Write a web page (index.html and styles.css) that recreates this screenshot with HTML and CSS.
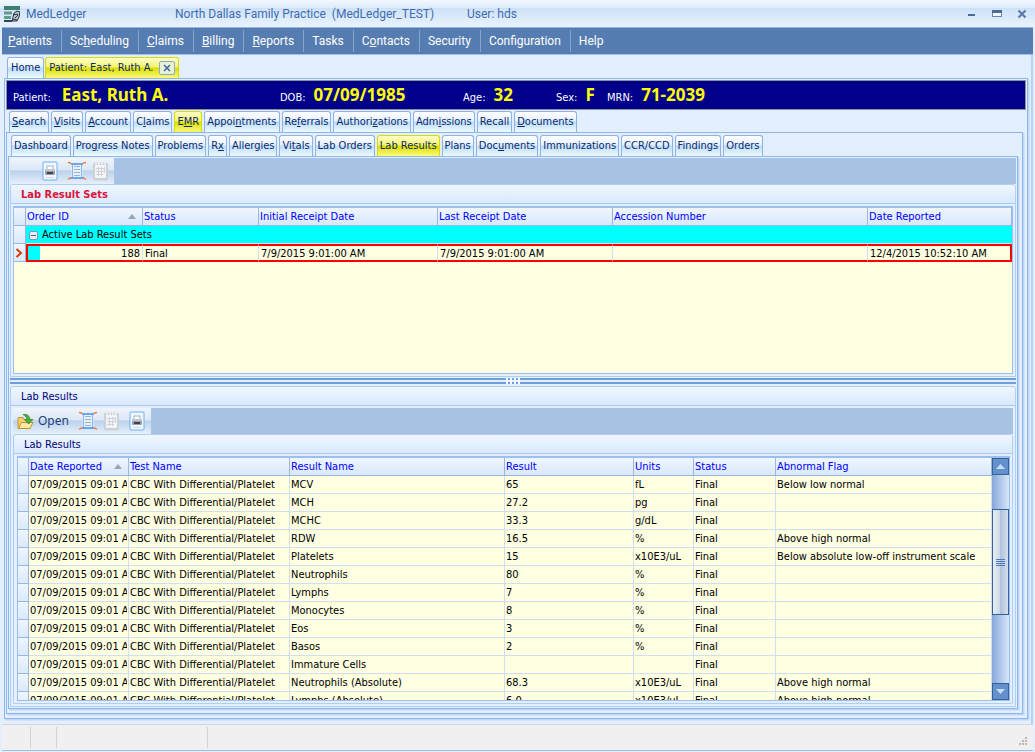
FILE: index.html
```html
<!DOCTYPE html>
<html lang="en">
<head>
    <meta charset="UTF-8">
    <meta name="viewport" content="width=device-width, initial-scale=1.0">
    <title>MedLedger</title>
    <link rel="stylesheet" href="styles.css">
</head>
<body>
    <svg class="sprite" aria-hidden="true">
        <symbol id="icon-print" viewBox="0 0 16 20">
            <rect x="1" y="1" width="14" height="18" rx="1" fill="#f1f7ff" stroke="#6cb0f2"/>
            <rect x="5" y="5" width="6" height="4" fill="#fff" stroke="#aab4c4"/>
            <rect x="3" y="8" width="10" height="6" rx="1" fill="#9aa0aa"/>
            <rect x="3" y="8" width="10" height="2" fill="#c1c6cf"/>
            <rect x="5" y="11" width="6" height="2" fill="#3c4350"/>
            <path d="M4 16.500h8" stroke="#d3dbe6"/>
        </symbol>
        <symbol id="icon-scroll" viewBox="0 0 20 20">
            <path d="M3 2h14l-1.500 3v10l2 3h-15l2-3v-10z" fill="#e6effc"/>
            <path d="M4 3h12M3 17h14" stroke="#6ea5ea" stroke-width="2"/>
            <path d="M5.500 4v12M14.500 4v12" stroke="#8bb7ee"/>
            <path d="M7 5.500h6M7 8.500h6M7 11.500h6M7 14.500h6" stroke="#9fb4cf"/>
            <path d="M1 1.500l3 .5M19 1.500l-3 .5M1 18.500l3-2M19 18.500l-3-2" stroke="#ff7a33" stroke-width="1.500"/>
        </symbol>
        <symbol id="icon-sheet" viewBox="0 0 17 20">
            <rect x="1" y="1.500" width="15" height="18" rx="2" fill="#ccd0d7"/>
            <rect x="3" y="4" width="11" height="13" fill="#f3f4f6"/>
            <path d="M3 2.500h11" stroke="#f2f2f2" stroke-width="2" stroke-dasharray="2 1"/>
            <path d="M4 7.500h9M4 10.500h9M4 13.500h7M6.500 6v9M9.500 6v9M12.500 6v6" stroke="#cfd3d9"/>
        </symbol>
        <symbol id="icon-folder" viewBox="0 0 17 17">
            <path d="M1 15.500v-10q0-1 1-1h4l1 2h6v9z" fill="#f5cf6b" stroke="#c39432"/>
            <path d="M1.500 15.500l3-6h11.500l-3 6z" fill="#ffe9a0" stroke="#c39432"/>
            <path d="M6 1.500q6-1 7 5h3l-4.500 4.500-4-4.500h2.500q0-3-4-5z" fill="#4cae3d" stroke="#2f8527" stroke-width=".7"/>
        </symbol>
    </svg>

    <div class="window">
        <header class="titlebar">
            <svg class="logo" viewBox="0 0 16 16" aria-hidden="true">
                <path d="M0 2h16" stroke="#3f7f72" stroke-width="4"/>
                <path d="M0 7h8M0 11.500h7" stroke="#629a90" stroke-width="3"/>
                <path d="M0 15h8" stroke="#2d4a4a" stroke-width="2"/>
                <path d="M8 15l1-4 1-4 3-2 3 1-1 5-2 4z" fill="#b9c6d0" stroke="#26303a"/>
                <path d="M9 9l5-1M11 12l3-3M9 13l4 1" stroke="#26303a"/>
            </svg>
            <span class="app-name">MedLedger</span>
            <span class="practice">North Dallas Family Practice&nbsp; (MedLedger_TEST)</span>
            <span class="user">User: hds</span>
            <div class="window-buttons">
                <button aria-label="Minimize"><svg viewBox="0 0 10 10"><path d="M1 6h7" stroke="#4a6a99" stroke-width="2"/></svg></button>
                <button aria-label="Maximize"><svg viewBox="0 0 10 10"><rect x=".5" y="1.500" width="9" height="6" fill="#f4f9ff" stroke="#6a87b2"/><path d="M0 2.500h10" stroke="#4a6a99" stroke-width="3"/></svg></button>
                <button aria-label="Close"><svg viewBox="0 0 10 10"><path d="M1.500 1.500l7 7M8.500 1.500l-7 7" stroke="#5877a6" stroke-width="2"/></svg></button>
            </div>
        </header>

        <nav class="menu">
            <button><u>P</u>atients</button>
            <button>Sc<u>h</u>eduling</button>
            <button><u>C</u>laims</button>
            <button><u>B</u>illing</button>
            <button><u>R</u>eports</button>
            <button>Tasks</button>
            <button>C<u>o</u>ntacts</button>
            <button>Security</button>
            <button>Configuration</button>
            <button>Help</button>
        </nav>

        <main class="workspace">
            <div class="tabs page-tabs">
                <button class="tab">Home</button>
                <div class="tab active closable">
                    <button class="tab-label">Patient: East, Ruth A.</button>
                    <button class="tab-close" aria-label="Close tab"><svg viewBox="0 0 8 8"><path d="M1 1l6 6M7 1l-6 6" stroke="#3f64a0" stroke-width="1.500"/></svg></button>
                </div>
            </div>

            <div class="panel page">
                <dl class="patient">
                    <div class="patient-name"><dt>Patient:</dt><dd>East, Ruth A.</dd></div>
                    <div><dt>DOB:</dt><dd>07/09/1985</dd></div>
                    <div><dt>Age:</dt><dd>32</dd></div>
                    <div><dt>Sex:</dt><dd>F</dd></div>
                    <div><dt>MRN:</dt><dd>71-2039</dd></div>
                </dl>

                <div class="tabs">
                    <button class="tab"><u>S</u>earch</button>
                    <button class="tab"><u>V</u>isits</button>
                    <button class="tab"><u>A</u>ccount</button>
                    <button class="tab">C<u>l</u>aims</button>
                    <button class="tab active">E<u>M</u>R</button>
                    <button class="tab">Appoi<u>n</u>tments</button>
                    <button class="tab">Re<u>f</u>errals</button>
                    <button class="tab">Authori<u>z</u>ations</button>
                    <button class="tab">Adm<u>i</u>ssions</button>
                    <button class="tab">Recall</button>
                    <button class="tab"><u>D</u>ocuments</button>
                </div>

                <div class="panel emr">
                    <div class="tabs">
                        <button class="tab">Dashboard</button>
                        <button class="tab">Pro<u>g</u>ress Notes</button>
                        <button class="tab">Problems</button>
                        <button class="tab">R<u>x</u></button>
                        <button class="tab">Aller<u>g</u>ies</button>
                        <button class="tab">Vi<u>t</u>als</button>
                        <button class="tab">Lab Orders</button>
                        <button class="tab active">Lab Results</button>
                        <button class="tab">Plans</button>
                        <button class="tab">Doc<u>u</u>ments</button>
                        <button class="tab">Immunizations</button>
                        <button class="tab">CCR/CCD</button>
                        <button class="tab">Findings</button>
                        <button class="tab">Orders</button>
                    </div>

                    <div class="panel labs">
                        <div class="toolbar">
                            <div class="tools tools-sets">
                                <button class="print-button" aria-label="Print"><svg class="print"><use href="#icon-print"/></svg></button>
                                <button aria-label="View report"><svg class="scroll"><use href="#icon-scroll"/></svg></button>
                                <button aria-label="Flow sheet" disabled><svg class="sheet"><use href="#icon-sheet"/></svg></button>
                            </div>
                        </div>

                        <section class="group sets">
                            <h2 class="caption caption-red">Lab Result Sets</h2>
                            <div class="grid">
                                <table class="sets-table">
                                    <colgroup><col><col><col><col><col><col><col></colgroup>
                                    <thead>
                                        <tr><th></th><th class="sorted">Order ID</th><th>Status</th><th>Initial Receipt Date</th><th>Last Receipt Date</th><th>Accession Number</th><th>Date Reported</th></tr>
                                    </thead>
                                    <tbody>
                                        <tr class="group-row"><td class="marker"></td><td colspan="6"><button class="collapse" aria-label="Collapse group"></button>Active Lab Result Sets</td></tr>
                                        <tr class="selected"><td class="marker"><svg viewBox="0 0 8 10"><path d="M1.500 1l4.500 4-4.500 4" fill="none" stroke="#d83a10" stroke-width="2"/></svg></td><td class="number">188</td><td>Final</td><td>7/9/2015 9:01:00 AM</td><td>7/9/2015 9:01:00 AM</td><td></td><td>12/4/2015 10:52:10 AM</td></tr>
                                    </tbody>
                                </table>
                            </div>
                        </section>

                        <div class="splitter"><span></span></div>

                        <section class="group results">
                            <h2 class="caption">Lab Results</h2>
                            <div class="toolbar">
                                <div class="tools tools-results">
                                    <button class="open"><svg class="folder"><use href="#icon-folder"/></svg>Open</button>
                                    <button aria-label="View report"><svg class="scroll"><use href="#icon-scroll"/></svg></button>
                                    <button aria-label="Flow sheet" disabled><svg class="sheet"><use href="#icon-sheet"/></svg></button>
                                    <button class="print-button" aria-label="Print"><svg class="print"><use href="#icon-print"/></svg></button>
                                </div>
                            </div>
                            <div class="group inner">
                                <h3 class="caption">Lab Results</h3>
                                <div class="grid">
                                    <div class="grid-view">
                                        <table class="results-table">
                                            <colgroup><col><col><col><col><col><col><col><col></colgroup>
                                            <thead>
                                                <tr><th></th><th class="sorted">Date Reported</th><th>Test Name</th><th>Result Name</th><th>Result</th><th>Units</th><th>Status</th><th>Abnormal Flag</th></tr>
                                            </thead>
                                            <tbody>
                                                <tr><td class="marker"></td><td>07/09/2015 09:01 AM</td><td>CBC With Differential/Platelet</td><td>MCV</td><td>65</td><td>fL</td><td>Final</td><td>Below low normal</td></tr>
                                                <tr><td class="marker"></td><td>07/09/2015 09:01 AM</td><td>CBC With Differential/Platelet</td><td>MCH</td><td>27.2</td><td>pg</td><td>Final</td><td></td></tr>
                                                <tr><td class="marker"></td><td>07/09/2015 09:01 AM</td><td>CBC With Differential/Platelet</td><td>MCHC</td><td>33.3</td><td>g/dL</td><td>Final</td><td></td></tr>
                                                <tr><td class="marker"></td><td>07/09/2015 09:01 AM</td><td>CBC With Differential/Platelet</td><td>RDW</td><td>16.5</td><td>%</td><td>Final</td><td>Above high normal</td></tr>
                                                <tr><td class="marker"></td><td>07/09/2015 09:01 AM</td><td>CBC With Differential/Platelet</td><td>Platelets</td><td>15</td><td>x10E3/uL</td><td>Final</td><td>Below absolute low-off instrument scale</td></tr>
                                                <tr><td class="marker"></td><td>07/09/2015 09:01 AM</td><td>CBC With Differential/Platelet</td><td>Neutrophils</td><td>80</td><td>%</td><td>Final</td><td></td></tr>
                                                <tr><td class="marker"></td><td>07/09/2015 09:01 AM</td><td>CBC With Differential/Platelet</td><td>Lymphs</td><td>7</td><td>%</td><td>Final</td><td></td></tr>
                                                <tr><td class="marker"></td><td>07/09/2015 09:01 AM</td><td>CBC With Differential/Platelet</td><td>Monocytes</td><td>8</td><td>%</td><td>Final</td><td></td></tr>
                                                <tr><td class="marker"></td><td>07/09/2015 09:01 AM</td><td>CBC With Differential/Platelet</td><td>Eos</td><td>3</td><td>%</td><td>Final</td><td></td></tr>
                                                <tr><td class="marker"></td><td>07/09/2015 09:01 AM</td><td>CBC With Differential/Platelet</td><td>Basos</td><td>2</td><td>%</td><td>Final</td><td></td></tr>
                                                <tr><td class="marker"></td><td>07/09/2015 09:01 AM</td><td>CBC With Differential/Platelet</td><td>Immature Cells</td><td></td><td></td><td>Final</td><td></td></tr>
                                                <tr><td class="marker"></td><td>07/09/2015 09:01 AM</td><td>CBC With Differential/Platelet</td><td>Neutrophils (Absolute)</td><td>68.3</td><td>x10E3/uL</td><td>Final</td><td>Above high normal</td></tr>
                                                <tr><td class="marker"></td><td>07/09/2015 09:01 AM</td><td>CBC With Differential/Platelet</td><td>Lymphs (Absolute)</td><td>6.0</td><td>x10E3/uL</td><td>Final</td><td>Above high normal</td></tr>
                                            </tbody>
                                        </table>
                                    </div>
                                    <div class="scrollbar">
                                        <button aria-label="Scroll up"><svg viewBox="0 0 9 5"><path d="M0 5l4.500-5 4.500 5z" fill="#c9dcf4"/></svg></button>
                                        <div class="track"><div class="thumb"></div></div>
                                        <button aria-label="Scroll down"><svg viewBox="0 0 9 5"><path d="M0 0l4.500 5 4.500-5z" fill="#c9dcf4"/></svg></button>
                                    </div>
                                </div>
                            </div>
                        </section>
                    </div>
                </div>
            </div>
        </main>

        <footer class="statusbar">
            <span></span><span></span><span></span>
            <svg class="grip" viewBox="0 0 8 8"><path d="M6 0h2v2h-2zM3 3h2v2h-2zM6 3h2v2h-2zM0 6h2v2h-2zM3 6h2v2h-2zM6 6h2v2h-2z" fill="#b9b9b9"/></svg>
        </footer>
    </div>
</body>
</html>
```
FILE: styles.css
```css
* {
    margin: 0;
    padding: 0;
    box-sizing: border-box;
}

body {
    height: 100vh;
    font-family: "DejaVu Sans Condensed", "DejaVu Sans", sans-serif;
    font-size: 11px;
    line-height: 14px;
    color: #000;
    background: #e3efff;
}

button {
    font: inherit;
    color: inherit;
    border: none;
    background: none;
    white-space: nowrap;
}

svg {
    display: block;
}

.sprite {
    display: none;
}

.window {
    display: flex;
    flex-direction: column;
    height: 100vh;
    min-height: 600px;
}

/* title bar */
.titlebar {
    display: flex;
    align-items: center;
    flex: none;
    height: 27px;
    padding: 0 8px 0 4px;
    font-family: Roboto, sans-serif;
    font-size: 12px;
    color: #3f6cb0;
    background: linear-gradient(#f2f8ff, #dcebfa 30%, #cde2f8 31%, #e9f3fd);
}

.logo {
    width: 16px;
    height: 16px;
    margin-right: 6px;
}

.app-name {
    width: 149px;
}

.practice {
    width: 292px;
}

.window-buttons {
    display: flex;
    gap: 15px;
    margin-left: auto;
}

.window-buttons svg {
    width: 10px;
    height: 10px;
}

/* main menu */
.menu {
    display: flex;
    align-items: center;
    flex: none;
    height: 28px;
    margin: 0 2px;
    border-top: 1px solid #8db4e3;
    border-bottom: 1px solid #9ec3f0;
    color: #fff;
    background: #567db1;
}

.menu button {
    height: 22px;
    padding: 0 9px 0 8px;
    border-right: 1px solid #86a5cf;
    font-family: Roboto, sans-serif;
    font-size: 12px;
}

.menu button:first-child {
    padding-left: 6px;
}

.menu button:last-child {
    border-right: none;
}

.workspace {
    display: flex;
    flex-direction: column;
    flex: 1;
    min-height: 0;
    margin: 0 2px;
    padding: 2px 3px 5px 2px;
    border-right: 2px solid #b5d2f5;
}

/* tabs */
.tabs {
    display: flex;
    flex: none;
    gap: 2px;
    height: 21px;
    padding-left: 3px;
    color: #0b2a6b;
}

.tab {
    padding: 0 2px;
    border: 1px solid #8db2e3;
    border-bottom: none;
    border-radius: 3px 3px 0 0;
    background: linear-gradient(#fff, #e4f1ff 45%, #bcdcfb 50%, #eefaff);
}

.tab.active {
    border-color: #d8dc00;
    background: linear-gradient(#ffffc8, #f4f470 45%, #dcdc00 50%, #fafa7c);
}

.page-tabs {
    gap: 1px;
}

.page-tabs .tab {
    padding: 0 3px;
}

.closable {
    display: flex;
    align-items: center;
    gap: 6px;
}

.tab-close {
    padding: 2px 3px;
    border: 1px solid #8caad0;
    border-radius: 2px;
    background: #e8f0d8;
}

.tab-close svg {
    width: 8px;
    height: 8px;
}

.panel {
    display: flex;
    flex-direction: column;
    flex: 1;
    min-height: 0;
    padding: 1px;
    border: 1px solid #8db6ea;
    background: #e3efff;
    box-shadow: 1px 1px #c0d7f5, 2px 2px #d2e3fa;
}

/* patient banner */
.patient {
    display: grid;
    grid-template-columns: 267px 183px 93px 51px auto;
    align-items: center;
    flex: none;
    height: 30px;
    margin-bottom: 1px;
    padding-left: 6px;
    border: 1px solid #8a8f98;
    background: #00008b;
}

.patient div {
    display: flex;
    align-items: baseline;
    gap: 8px;
}

.patient .patient-name {
    gap: 11px;
}

.patient dt {
    color: #fff;
}

.patient dd {
    font-family: "Noto Sans", sans-serif;
    font-size: 17px;
    line-height: 24px;
    font-weight: bold;
    color: #ff0;
}

.page > .panel {
    margin-right: 3px;
    margin-bottom: 3px;
}

.emr {
    padding-top: 2px;
}

.emr > .panel {
    margin-right: 3px;
    margin-bottom: 3px;
}

/* toolbars */
.toolbar {
    flex: none;
    height: 26px;
    background: #a6c3e3;
}

.tools {
    display: flex;
    align-items: center;
    gap: 5px;
    width: max-content;
    height: 26px;
    background: linear-gradient(#eef4fc, #dce8f6 45%, #bdd2ec 50%, #e6f0fb);
}

.tools-sets {
    padding: 0 5px 0 32px;
}

.tools-sets .print-button {
    margin-right: 4px;
}

.tools-results {
    padding: 0 6px 0 4px;
}

.tools-results .print-button {
    margin-left: 4px;
}

.open {
    display: flex;
    align-items: center;
    gap: 4px;
    margin-right: 4px;
    font-family: "Noto Sans", sans-serif;
    font-size: 12px;
    color: #1e3f7d;
}

.print {
    width: 16px;
    height: 20px;
}

.scroll {
    width: 20px;
    height: 20px;
}

.sheet {
    width: 17px;
    height: 20px;
}

.folder {
    width: 17px;
    height: 17px;
}

/* group boxes */
.group {
    display: flex;
    flex-direction: column;
    padding: 0 2px 2px;
    border: 1px solid #b0cff5;
    border-radius: 3px 3px 0 0;
    background: #e3efff;
}

.caption {
    flex: none;
    height: 19px;
    margin: 0 -2px 2px;
    padding: 3px 10px;
    border-bottom: 1px solid #a9c9f2;
    border-radius: 3px 3px 0 0;
    font-size: 11px;
    font-weight: normal;
    color: #00007b;
    background: linear-gradient(#eff6ff, #d9e9fc);
}

.caption-red {
    font-weight: bold;
    color: #dc143c;
}

.sets {
    flex: 0 0 193px;
}

.results {
    flex: 1;
    min-height: 0;
}

.inner {
    flex: 1;
    min-height: 0;
    padding-left: 3px;
}

.inner .caption {
    margin-left: -3px;
}

/* data grids */
.grid {
    display: flex;
    align-items: stretch;
    flex: 1;
    min-height: 0;
    border: 1px solid #9cc0ee;
    border-top: 2px solid #9cc0ee;
    background: #ffffe1;
    overflow: hidden;
}

.grid-view {
    flex: 1;
    min-width: 0;
    overflow: hidden;
}

table {
    width: 100%;
    height: max-content;
    table-layout: fixed;
    border-spacing: 0;
}

.sets-table col:nth-child(1) { width: 12px; }
.sets-table col:nth-child(2) { width: 117px; }
.sets-table col:nth-child(3) { width: 116px; }
.sets-table col:nth-child(4) { width: 179px; }
.sets-table col:nth-child(5) { width: 175px; }
.sets-table col:nth-child(6) { width: 255px; }

.results-table col:nth-child(1) { width: 11px; }
.results-table col:nth-child(2) { width: 100px; }
.results-table col:nth-child(3) { width: 161px; }
.results-table col:nth-child(4) { width: 215px; }
.results-table col:nth-child(5) { width: 129px; }
.results-table col:nth-child(6) { width: 60px; }
.results-table col:nth-child(7) { width: 82px; }

th,
td {
    height: 18px;
    padding: 0 1px;
    border-right: 1px solid #d0def2;
    border-bottom: 1px solid #d0def2;
    text-align: left;
    white-space: nowrap;
    overflow: clip;
    overflow-clip-margin: content-box;
}

th {
    border-color: #9ab8dd;
    font-weight: normal;
    color: #00f;
    background: linear-gradient(#f0f6ff, #d8e8fb);
}

.sorted::after {
    content: "";
    float: right;
    margin: 4px 5px 0 0;
    border: 4px solid transparent;
    border-top: none;
    border-bottom: 5px solid #98a4b8;
}

.selected td:not(.marker) {
    padding: 0 2px;
    border-top: 2px solid #f00;
    border-bottom: 2px solid #f00;
    line-height: 13px;
}

.marker {
    border-color: #9ab8dd;
    background: linear-gradient(#eff6ff, #d9e9fc);
}

.marker svg {
    width: 8px;
    height: 10px;
}

.group-row td:last-child {
    padding-left: 3px;
    border-right: none;
    background: #0ff;
}

.collapse {
    width: 9px;
    height: 9px;
    margin-right: 4px;
    border: 1px solid #7f93b2;
    border-radius: 2px;
    vertical-align: -1px;
    background: linear-gradient(#4a5f85, #4a5f85) center / 5px 1px no-repeat, #e8eef8;
}

.selected .number {
    border-left: 2px solid #f00;
    text-align: right;
    background: linear-gradient(#0ff, #0ff) left / 12px 100% no-repeat;
}

.selected td:last-child {
    border-right: 2px solid #f00;
}

.splitter {
    display: flex;
    align-items: center;
    justify-content: center;
    flex: none;
    height: 6px;
    margin: 1px 0 2px;
    border-top: 2px solid #6f9fdd;
    border-bottom: 2px solid #6f9fdd;
    background: #e3efff;
}

.splitter span {
    width: 14px;
    height: 6px;
    flex: none;
    background: repeating-linear-gradient(to right, #f4f9ff 0 2px, transparent 2px 4px);
}

/* scrollbar */
.scrollbar {
    display: flex;
    flex-direction: column;
    flex: none;
    width: 17px;
    background: linear-gradient(to right, #86a7db, #d8e6f8);
}

.scrollbar button {
    display: flex;
    align-items: center;
    justify-content: center;
    height: 17px;
    border: 1px solid #34609c;
    background: #6490cc;
}

.scrollbar button svg {
    width: 9px;
    height: 5px;
}

.track {
    flex: 1;
    padding-top: 34px;
}

.thumb {
    height: 106px;
    border: 1px solid #34609c;
    background: repeating-linear-gradient(#5079b8 0 1px, transparent 1px 2px) center / 9px 7px no-repeat, linear-gradient(to right, #e8eef5, #ccd8e6 48%, #b0c4dc 50%, #d4dfeb);
}

/* status bar */
.statusbar {
    display: flex;
    flex: none;
    height: 27px;
    margin: 0 2px 1px;
    padding: 2px 6px 2px 0;
    border-top: 1px solid #d5d5d5;
    border-bottom: 1px solid #9cc0ee;
    background: #f0f0f0;
}

.statusbar span {
    width: 29px;
    border-right: 1px solid #d2d2d2;
}

.statusbar span:nth-child(2) {
    width: 26px;
}

.statusbar span:nth-child(3) {
    width: 151px;
}

.grip {
    width: 8px;
    height: 8px;
    margin: auto 0 3px auto;
}
```
